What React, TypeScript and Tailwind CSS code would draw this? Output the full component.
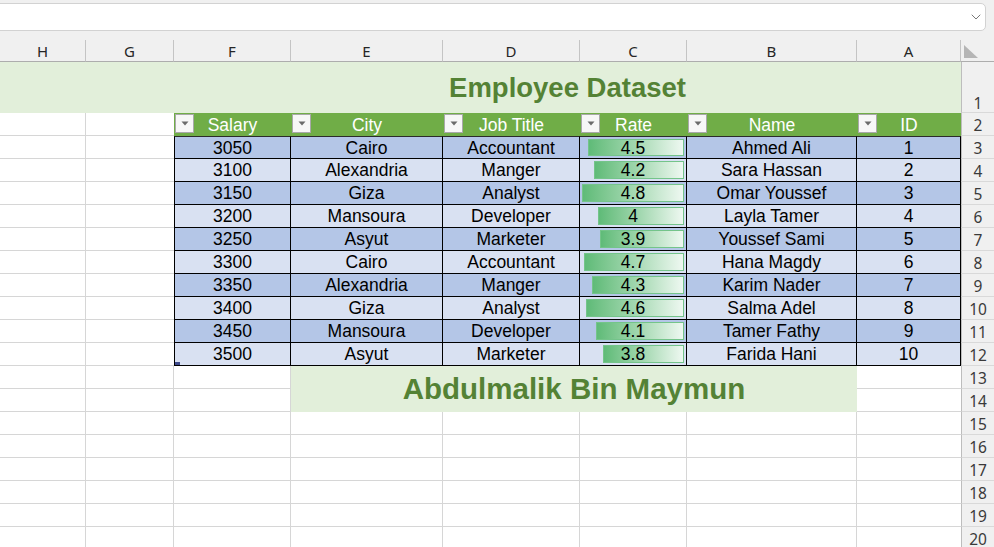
import { ChevronDown } from "lucide-react";

type Row = { salary: number; city: string; job: string; rate: number; name: string; id: number };

const DATA: Row[] = [
  { salary: 3050, city: "Cairo", job: "Accountant", rate: 4.5, name: "Ahmed Ali", id: 1 },
  { salary: 3100, city: "Alexandria", job: "Manger", rate: 4.2, name: "Sara Hassan", id: 2 },
  { salary: 3150, city: "Giza", job: "Analyst", rate: 4.8, name: "Omar Youssef", id: 3 },
  { salary: 3200, city: "Mansoura", job: "Developer", rate: 4, name: "Layla Tamer", id: 4 },
  { salary: 3250, city: "Asyut", job: "Marketer", rate: 3.9, name: "Youssef Sami", id: 5 },
  { salary: 3300, city: "Cairo", job: "Accountant", rate: 4.7, name: "Hana Magdy", id: 6 },
  { salary: 3350, city: "Alexandria", job: "Manger", rate: 4.3, name: "Karim Nader", id: 7 },
  { salary: 3400, city: "Giza", job: "Analyst", rate: 4.6, name: "Salma Adel", id: 8 },
  { salary: 3450, city: "Mansoura", job: "Developer", rate: 4.1, name: "Tamer Fathy", id: 9 },
  { salary: 3500, city: "Asyut", job: "Marketer", rate: 3.8, name: "Farida Hani", id: 10 },
];

const LETTERS = ["H", "G", "F", "E", "D", "C", "B", "A"];
const HEADERS = ["Salary", "City", "Job Title", "Rate", "Name", "ID"];

function RowHead({ n, bottom }: { n: number; bottom?: boolean }) {
  return (
    <div
      className={`bg-[#f0f0f0] border-l border-l-[#bdbdbd] border-b border-b-[#d9d9d9] flex justify-center text-[15.5px] text-[#3a3a3a] font-['Noto_Sans',sans-serif] ${
        bottom ? "items-end leading-[17px]" : "items-center leading-[20px] pt-[2px]"
      }`}
    >
      {n}
    </div>
  );
}

function Empty({ right = true }: { right?: boolean }) {
  return <div className={`bg-white border-b border-[#d6d6d6] ${right ? "border-r" : ""}`} />;
}

function FilterBtn() {
  return (
    <div className="absolute left-[1px] top-[1px] w-[19px] h-[19px] bg-[#f7f7f7] border border-[#a9a9a9] flex items-center justify-center">
      <svg width="8" height="5" viewBox="0 0 8 5">
        <polygon points="0.5,0.5 7.5,0.5 4,4.5" fill="#6b6b6b" />
      </svg>
    </div>
  );
}

export default function App() {
  return (
    <div className="w-[994px] h-[547px] overflow-hidden bg-white font-['Liberation_Sans',Arial,sans-serif]">
      {/* formula bar */}
      <div className="h-[40px] bg-[#f0f0f0] pt-[3px] pr-[8px]">
        <div className="h-[28px] -ml-[6px] bg-white border border-[#d2d2d2] rounded-[5px] flex items-center justify-end pr-[1px]">
          <ChevronDown size={16} strokeWidth={1.2} className="text-[#555]" />
        </div>
      </div>

      <div className="grid grid-cols-[86px_88px_117px_152px_137px_107px_170px_104px_33px] grid-rows-[22px_51px_repeat(19,23px)]">
        {/* column header */}
        {LETTERS.map((l) => (
          <div
            key={l}
            className="bg-[#f0f0f0] border-r border-r-[#c4c4c4] border-b border-b-[#adadad] flex items-center justify-center pt-[2px] text-[15px] text-[#262626] font-['Noto_Sans',sans-serif]"
          >
            {l}
          </div>
        ))}
        <div className="bg-[#f0f0f0] border-b border-b-[#adadad]">
          <svg width="33" height="21" viewBox="0 0 33 21">
            <polygon points="3,5 3,18 17,18" fill="#b5b5b5" />
          </svg>
        </div>

        {/* row 1 title */}
        <div className="col-span-2 bg-[#e2efda]" />
        <div className="col-span-6 bg-[#e2efda] flex items-center justify-center pt-[1px] text-[27.5px] font-bold text-[#548235]">
          Employee Dataset
        </div>
        <RowHead n={1} bottom />

        {/* row 2 header */}
        <Empty />
        <Empty right={false} />
        {HEADERS.map((h) => (
          <div key={h} className="relative bg-[#70ad47] flex items-center justify-center pt-[2px] text-[17.5px] leading-none text-white">
            <FilterBtn />
            <span className="relative">{h}</span>
          </div>
        ))}
        <RowHead n={2} />

        {/* data rows */}
        {DATA.map((r, i) => {
          const bg = i % 2 === 0 ? "bg-[#b4c6e7]" : "bg-[#d9e1f2]";
          const top = i === 0 ? "border-t border-t-[#2b2b2b]" : "";
          const cell = `${bg} ${top} border-r border-b border-black flex items-center justify-center pt-[2px] text-[17.5px] text-black leading-none`;
          const barW = 81.5 + (r.rate - 3.8) * 21;
          return [
            <Empty key={`h${i}`} />,
            <Empty key={`g${i}`} right={false} />,
            <div key={`f${i}`} className={`${cell} border-l relative`}>
              {r.salary}
              {i === DATA.length - 1 && (
                <div className="absolute left-0 bottom-0 w-[5px] h-[3px] bg-[#3d4a8c]" />
              )}
            </div>,
            <div key={`e${i}`} className={cell}>{r.city}</div>,
            <div key={`d${i}`} className={cell}>{r.job}</div>,
            <div key={`c${i}`} className={`${cell} relative`}>
              <div
                className="absolute right-[2px] top-[2px] bottom-[2px] border border-[#74c48a] bg-linear-to-r from-[#5fbb78] via-[#a3d8b1] to-[#eef8f1]"
                style={{ width: `${barW}px` }}
              />
              <span className="relative">{r.rate}</span>
            </div>,
            <div key={`b${i}`} className={cell}>{r.name}</div>,
            <div key={`a${i}`} className={cell}>{r.id}</div>,
            <RowHead key={`rh${i}`} n={i + 3} />,
          ];
        })}

        {/* row 13-14 */}
        <Empty />
        <Empty />
        <Empty />
        <div className="col-span-4 row-span-2 bg-[#e2efda] flex items-center justify-center pt-[1px] text-[29.5px] font-bold text-[#548235]">
          Abdulmalik Bin Maymun
        </div>
        <Empty right={false} />
        <RowHead n={13} />
        <Empty />
        <Empty />
        <Empty />
        <Empty right={false} />
        <RowHead n={14} />

        {/* rows 15-20 */}
        {[15, 16, 17, 18, 19, 20].map((n) => [
          ...LETTERS.map((l, j) => <Empty key={`${n}${l}`} right={j < 7} />),
          <RowHead key={`rh${n}`} n={n} />,
        ])}
      </div>
    </div>
  );
}
